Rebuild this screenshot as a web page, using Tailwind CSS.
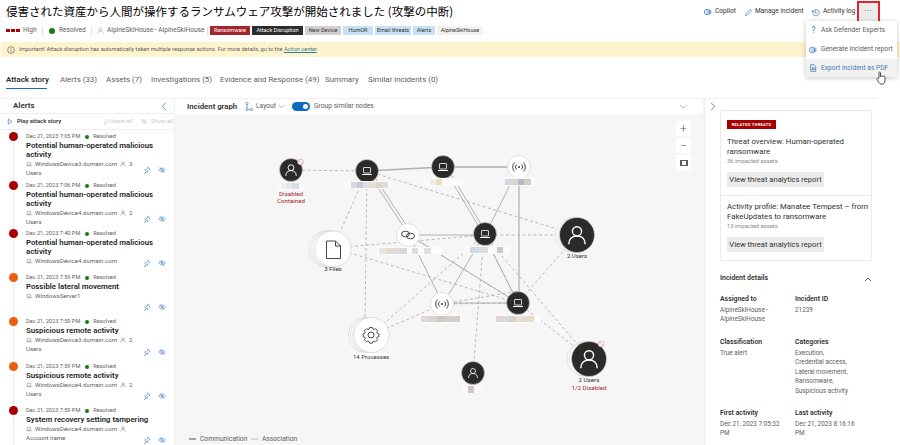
<!DOCTYPE html>
<html lang="en">
<head>
  <meta charset="UTF-8">
  <title>Incident page</title>
  <script src="https://cdn.jsdelivr.net/npm/@tailwindcss/browser@4"></script>
</head>
<body class="relative w-[900px] h-[445px] overflow-hidden bg-white text-[#323130] font-['Roboto','Noto_Sans_CJK_JP',sans-serif]">

  <!-- shared icons -->
  <svg class="absolute w-0 h-0">
    <symbol id="person" viewBox="0 0 24 24"><circle cx="12" cy="8" r="5" fill="none" stroke="currentColor" stroke-width="1.6"/><path d="M3 22c0-6 4-9 9-9s9 3 9 9" fill="none" stroke="currentColor" stroke-width="1.6"/></symbol>
    <symbol id="laptop" viewBox="0 0 24 24"><rect x="5" y="5" width="14" height="11" rx="1" fill="none" stroke="currentColor" stroke-width="1.6"/><path d="M2 19h20" stroke="currentColor" stroke-width="2"/></symbol>
    <symbol id="pin" viewBox="0 0 24 24"><path d="M14 3l7 7-3 1-4 4-1 5-3-3-6 6 6-6-5-5 5-1 4-4z" fill="none" stroke="currentColor" stroke-width="1.8"/></symbol>
    <symbol id="hide" viewBox="0 0 24 24"><path d="M2 12c3-4 6-6 10-6s7 2 10 6c-3 4-6 6-10 6s-7-2-10-6z" fill="none" stroke="currentColor" stroke-width="1.8"/><circle cx="12" cy="12" r="3" fill="none" stroke="currentColor" stroke-width="1.8"/><path d="M5 4l15 16" stroke="currentColor" stroke-width="1.8"/></symbol>
    <symbol id="copilot" viewBox="0 0 24 24"><circle cx="9" cy="12" r="8" fill="none" stroke="currentColor" stroke-width="2.4"/><circle cx="15" cy="12" r="8" fill="currentColor" opacity=".55"/><path d="M12 4v16" stroke="#fff" stroke-width="2"/></symbol>
  </svg>

  <!-- title + actions -->
  <header class="flex h-[23px] items-start">
    <h1 class="w-[704px] shrink-0 pl-[6px] pt-[3px] text-[11.5px] leading-[16px] whitespace-nowrap text-black font-['Noto_Sans_CJK_JP',sans-serif]">侵害された資産から人間が操作するランサムウェア攻撃が開始されました (攻撃の中断)</h1>
    <div class="flex items-center text-[6.6px] text-[#323130] h-[23px] pt-[1px]">
      <svg class="w-[8px] h-[8px] mr-[3px] text-[#3f7fc4]"><use href="#copilot"/></svg>
      <span class="w-[21px] mr-[8px] whitespace-nowrap">Copilot</span>
      <svg class="w-[9px] h-[9px] mr-[2px] text-[#3f7fc4]" viewBox="0 0 24 24"><path d="M4 20l1-5L17 3l4 4L9 19z" fill="none" stroke="currentColor" stroke-width="2"/></svg>
      <span class="w-[49px] mr-[7px] whitespace-nowrap">Manage incident</span>
      <svg class="w-[9px] h-[9px] mr-[3px] text-[#3f7fc4]" viewBox="0 0 24 24"><path d="M4 6v5h5M5 11a8.500 8.500 0 1 1 0 3" fill="none" stroke="currentColor" stroke-width="2"/><path d="M12 7v6l4 2" fill="none" stroke="currentColor" stroke-width="2"/></svg>
      <span class="whitespace-nowrap">Activity log</span>
    </div>
  </header>

  <!-- the boxed overflow button -->
  <div class="absolute left-[857px] top-[1px] w-[23px] h-[23px] border-2 border-[#e8222a] bg-[#ebebeb] flex items-center justify-center text-[8px] leading-none tracking-[0.5px] pb-[3px]">···</div>

  <!-- status + tags -->
  <div class="flex items-center h-[15px] text-[6.6px] text-[#605e5c] whitespace-nowrap">
    <div class="flex gap-[1px] ml-[6px] mr-[3px]">
      <span class="w-[4px] h-[3px] bg-[#a80000]"></span><span class="w-[4px] h-[3px] bg-[#a80000]"></span><span class="w-[4px] h-[3px] bg-[#a80000]"></span>
    </div>
    <span class="w-[14px]">High</span>
    <span class="w-px h-[8px] bg-[#e1dfdd] ml-[5px] mr-[6px]"></span>
    <span class="w-[6px] h-[6px] rounded-full bg-[#107c10] mr-[4px]"></span>
    <span class="w-[27px]">Resolved</span>
    <span class="w-px h-[8px] bg-[#e1dfdd] ml-[5px] mr-[5px]"></span>
    <svg class="w-[7px] h-[7px] mr-[3px] text-[#8a8886]"><use href="#person"/></svg>
    <span class="w-[98px]">AlpineSkiHouse - AlpineSkiHouse</span>
    <span class="w-px h-[8px] bg-[#e1dfdd] ml-[2px] mr-[2px]"></span>
    <div class="flex gap-[2px] text-[5.5px] leading-[9px]">
      <span class="w-[40px] text-center bg-[#a4262c] text-white">Ransomware</span>
      <span class="w-[51px] text-center bg-[#2b2b2b] text-white">Attack Disruption</span>
      <span class="w-[36px] text-center bg-[#d2d0ce] text-[#323130]">New Device</span>
      <span class="w-[30px] text-center bg-[#c7e0f4] text-[#323130]">HumOR</span>
      <span class="w-[36px] text-center bg-[#c7e0f4] text-[#323130]">Email threats</span>
      <span class="w-[22px] text-center bg-[#c7e0f4] text-[#323130]">Alerts</span>
      <span class="w-[46px] text-center bg-[#f3f2f1] text-[#323130]">AlpineSkiHouse</span>
    </div>
  </div>

  <!-- warning banner -->
  <div class="flex items-center h-[15px] mt-[4px] ml-[1px] pl-[6px] bg-[#fdf3cd] text-[5.6px] text-[#605e5c] whitespace-nowrap">
    <svg class="w-[8px] h-[8px] mr-[4px]" viewBox="0 0 24 24"><circle cx="12" cy="12" r="10" fill="none" stroke="#323130" stroke-width="1.6"/><path d="M12 11v6M12 7v2" stroke="#323130" stroke-width="2"/></svg>
    <span>Important! Attack disruption has automatically taken multiple response actions. For more details, go to the <span class="text-[#2f7f9f] underline">Action center</span>.</span>
  </div>

  <!-- tabs -->
  <nav class="flex h-[17px] mt-[15px] ml-[6px] text-[7.9px] leading-[13px] text-[#605e5c] whitespace-nowrap">
    <div class="w-[54px]"><span class="block w-[41px] h-[17px] pt-[1px] border-b-[1.5px] border-[#0f6cbd] font-semibold text-[#323130]">Attack story</span></div>
    <span class="w-[46px] pt-[1px]">Alerts (33)</span>
    <span class="w-[45px] pt-[1px]">Assets (7)</span>
    <span class="w-[69px] pt-[1px]">Investigations (5)</span>
    <span class="w-[105px] pt-[1px]">Evidence and Response (49)</span>
    <span class="w-[43px] pt-[1px]">Summary</span>
    <span class="pt-[1px]">Similar incidents (0)</span>
  </nav>

  <!-- main area -->
  <main class="flex h-[347px] mt-[9px] w-[877px] border-t border-[#f0f0f0]">

    <!-- alerts panel -->
    <section class="w-[175px] shrink-0 overflow-hidden border-r border-[#f0f0f0]">
      <div class="flex items-center h-[15px] pl-[13px] pr-[7px] border-b border-[#f0f0f0] text-[8px] font-semibold">
        <span class="flex-1">Alerts</span>
        <svg class="w-[6px] h-[9px] text-[#3f7fc4]" viewBox="0 0 6 10"><path d="M5 1L1 5l4 4" fill="none" stroke="currentColor"/></svg>
      </div>
      <div class="flex items-center h-[16px] pl-[7px] border-b border-[#f0f0f0] text-[5.9px] whitespace-nowrap">
        <svg class="w-[6px] h-[7px] mr-[4px] text-[#3f7fc4]" viewBox="0 0 6 8"><path d="M1 1l4 3-4 3z" fill="none" stroke="currentColor" stroke-width=".8"/></svg>
        <span class="w-[86px] font-semibold">Play attack story</span>
        <svg class="w-[7px] h-[7px] text-[#c8c6c4]"><use href="#pin"/></svg>
        <span class="w-[22px] text-[#c8c6c4] mr-[8px]">Unpin all</span>
        <svg class="w-[8px] h-[7px] mr-[3px] text-[#c8c6c4]"><use href="#hide"/></svg>
        <span class="text-[#c8c6c4]">Show all</span>
      </div>

      <div class="flex h-[49px] mt-[2px] pl-[8px]">
        <div class="flex flex-col items-center w-[10px] mr-[8px]"><span class="w-[9px] h-[9px] shrink-0 rounded-full bg-[#a80000]"></span><span class="w-px flex-1 bg-[#e8e8e8] mt-[2px]"></span></div>
        <div class="w-[117px] text-[6.1px] leading-[9px] text-[#605e5c] whitespace-nowrap">
          <div class="flex items-center text-[5.6px]">Dec 21, 2023 7:05 PM<span class="w-[4px] h-[4px] rounded-full bg-[#107c10] ml-[5px] mr-[4px]"></span>Resolved</div>
          <div class="text-[7.8px] font-semibold text-[#201f1e]">Potential human-operated malicious<br>activity</div>
          <div class="flex items-center"><svg class="w-[6px] h-[6px] mr-[3px]"><use href="#laptop"/></svg>WindowsDevice3.domain.com<svg class="w-[6px] h-[6px] ml-[3px] mr-[3px]"><use href="#person"/></svg>3</div>
          <div>Users</div>
        </div>
        <div class="flex gap-[7px] self-end pb-[7px] text-[#3f7fc4]"><svg class="w-[8px] h-[8px]"><use href="#pin"/></svg><svg class="w-[8px] h-[8px]"><use href="#hide"/></svg></div>
      </div>
      <div class="flex h-[48px] pl-[8px]">
        <div class="flex flex-col items-center w-[10px] mr-[8px]"><span class="w-[9px] h-[9px] shrink-0 rounded-full bg-[#a80000]"></span><span class="w-px flex-1 bg-[#e8e8e8] mt-[2px]"></span></div>
        <div class="w-[117px] text-[6.1px] leading-[9px] text-[#605e5c] whitespace-nowrap">
          <div class="flex items-center text-[5.6px]">Dec 21, 2023 7:06 PM<span class="w-[4px] h-[4px] rounded-full bg-[#107c10] ml-[5px] mr-[4px]"></span>Resolved</div>
          <div class="text-[7.8px] font-semibold text-[#201f1e]">Potential human-operated malicious<br>activity</div>
          <div class="flex items-center"><svg class="w-[6px] h-[6px] mr-[3px]"><use href="#laptop"/></svg>WindowsDevice4.domain.com<svg class="w-[6px] h-[6px] ml-[3px] mr-[3px]"><use href="#person"/></svg>2</div>
          <div>Users</div>
        </div>
        <div class="flex gap-[7px] self-end pb-[6px] text-[#3f7fc4]"><svg class="w-[8px] h-[8px]"><use href="#pin"/></svg><svg class="w-[8px] h-[8px]"><use href="#hide"/></svg></div>
      </div>
      <div class="flex h-[44px] pl-[8px]">
        <div class="flex flex-col items-center w-[10px] mr-[8px]"><span class="w-[9px] h-[9px] shrink-0 rounded-full bg-[#a80000]"></span><span class="w-px flex-1 bg-[#e8e8e8] mt-[2px]"></span></div>
        <div class="w-[117px] text-[6.1px] leading-[9px] text-[#605e5c] whitespace-nowrap">
          <div class="flex items-center text-[5.6px]">Dec 21, 2023 7:40 PM<span class="w-[4px] h-[4px] rounded-full bg-[#107c10] ml-[5px] mr-[4px]"></span>Resolved</div>
          <div class="text-[7.8px] font-semibold text-[#201f1e]">Potential human-operated malicious<br>activity</div>
          <div class="flex items-center"><svg class="w-[6px] h-[6px] mr-[3px]"><use href="#laptop"/></svg>WindowsDevice4.domain.com</div>
        </div>
        <div class="flex gap-[7px] self-end pb-[6px] text-[#3f7fc4]"><svg class="w-[8px] h-[8px]"><use href="#pin"/></svg><svg class="w-[8px] h-[8px]"><use href="#hide"/></svg></div>
      </div>
      <div class="flex h-[44px] pl-[8px]">
        <div class="flex flex-col items-center w-[10px] mr-[8px]"><span class="w-[9px] h-[9px] shrink-0 rounded-full bg-[#ea5f0d]"></span><span class="w-px flex-1 bg-[#e8e8e8] mt-[2px]"></span></div>
        <div class="w-[117px] text-[6.1px] leading-[9px] text-[#605e5c] whitespace-nowrap">
          <div class="flex items-center text-[5.6px]">Dec 21, 2023 7:59 PM<span class="w-[4px] h-[4px] rounded-full bg-[#107c10] ml-[5px] mr-[4px]"></span>Resolved</div>
          <div class="text-[7.8px] font-semibold text-[#201f1e]">Possible lateral movement</div>
          <div class="flex items-center"><svg class="w-[6px] h-[6px] mr-[3px]"><use href="#laptop"/></svg>WindowsServer1</div>
        </div>
        <div class="flex gap-[7px] self-end pb-[6px] text-[#3f7fc4]"><svg class="w-[8px] h-[8px]"><use href="#pin"/></svg><svg class="w-[8px] h-[8px]"><use href="#hide"/></svg></div>
      </div>
      <div class="flex h-[45px] pl-[8px]">
        <div class="flex flex-col items-center w-[10px] mr-[8px]"><span class="w-[9px] h-[9px] shrink-0 rounded-full bg-[#ea5f0d]"></span><span class="w-px flex-1 bg-[#e8e8e8] mt-[2px]"></span></div>
        <div class="w-[117px] text-[6.1px] leading-[9px] text-[#605e5c] whitespace-nowrap">
          <div class="flex items-center text-[5.6px]">Dec 21, 2023 7:59 PM<span class="w-[4px] h-[4px] rounded-full bg-[#107c10] ml-[5px] mr-[4px]"></span>Resolved</div>
          <div class="text-[7.8px] font-semibold text-[#201f1e]">Suspicious remote activity</div>
          <div class="flex items-center"><svg class="w-[6px] h-[6px] mr-[3px]"><use href="#laptop"/></svg>WindowsDevice3.domain.com<svg class="w-[6px] h-[6px] ml-[3px] mr-[3px]"><use href="#person"/></svg>2</div>
          <div>Users</div>
        </div>
        <div class="flex gap-[7px] self-end pb-[6px] text-[#3f7fc4]"><svg class="w-[8px] h-[8px]"><use href="#pin"/></svg><svg class="w-[8px] h-[8px]"><use href="#hide"/></svg></div>
      </div>
      <div class="flex h-[44px] pl-[8px]">
        <div class="flex flex-col items-center w-[10px] mr-[8px]"><span class="w-[9px] h-[9px] shrink-0 rounded-full bg-[#ea5f0d]"></span><span class="w-px flex-1 bg-[#e8e8e8] mt-[2px]"></span></div>
        <div class="w-[117px] text-[6.1px] leading-[9px] text-[#605e5c] whitespace-nowrap">
          <div class="flex items-center text-[5.6px]">Dec 21, 2023 7:59 PM<span class="w-[4px] h-[4px] rounded-full bg-[#107c10] ml-[5px] mr-[4px]"></span>Resolved</div>
          <div class="text-[7.8px] font-semibold text-[#201f1e]">Suspicious remote activity</div>
          <div class="flex items-center"><svg class="w-[6px] h-[6px] mr-[3px]"><use href="#laptop"/></svg>WindowsDevice4.domain.com<svg class="w-[6px] h-[6px] ml-[3px] mr-[3px]"><use href="#person"/></svg>2</div>
          <div>Users</div>
        </div>
        <div class="flex gap-[7px] self-end pb-[6px] text-[#3f7fc4]"><svg class="w-[8px] h-[8px]"><use href="#pin"/></svg><svg class="w-[8px] h-[8px]"><use href="#hide"/></svg></div>
      </div>
      <div class="flex h-[44px] pl-[8px]">
        <div class="flex flex-col items-center w-[10px] mr-[8px]"><span class="w-[9px] h-[9px] shrink-0 rounded-full bg-[#a80000]"></span><span class="w-px flex-1 bg-[#e8e8e8] mt-[2px]"></span></div>
        <div class="w-[117px] text-[6.1px] leading-[9px] text-[#605e5c] whitespace-nowrap">
          <div class="flex items-center text-[5.6px]">Dec 21, 2023 7:59 PM<span class="w-[4px] h-[4px] rounded-full bg-[#107c10] ml-[5px] mr-[4px]"></span>Resolved</div>
          <div class="text-[7.8px] font-semibold text-[#201f1e]">System recovery setting tampering</div>
          <div class="flex items-center"><svg class="w-[6px] h-[6px] mr-[3px]"><use href="#laptop"/></svg>WindowsDevice4.domain.com<svg class="w-[6px] h-[6px] ml-[3px] mr-[3px]"><use href="#person"/></svg></div>
          <div>Account name</div>
        </div>
        <div class="flex gap-[7px] self-end pb-[6px] text-[#3f7fc4]"><svg class="w-[8px] h-[8px]"><use href="#pin"/></svg><svg class="w-[8px] h-[8px]"><use href="#hide"/></svg></div>
      </div>
    </section>

    <!-- incident graph -->
    <section class="w-[528px] shrink-0 flex flex-col">
      <div class="flex items-center h-[15px] pl-[12px] pr-[15px] text-[6.7px] text-[#605e5c] whitespace-nowrap">
        <span class="w-[50px] text-[7.8px] font-semibold text-[#323130] mr-[8px]">Incident graph</span>
        <svg class="w-[8px] h-[9px] mr-[3px] text-[#3f7fc4]" viewBox="0 0 8 9"><circle cx="2" cy="1.500" r="1.200" fill="none" stroke="currentColor" stroke-width=".7"/><circle cx="2" cy="7.500" r="1.200" fill="none" stroke="currentColor" stroke-width=".7"/><circle cx="6.500" cy="7.500" r="1.200" fill="none" stroke="currentColor" stroke-width=".7"/><path d="M2 3v3M3.500 7.500h1.800" stroke="currentColor" stroke-width=".7"/></svg>
        <span class="w-[19px] mr-[3px]">Layout</span>
        <svg class="w-[7px] h-[5px] mr-[7px] text-[#8a8886]" viewBox="0 0 8 5"><path d="M1 1l3 3 3-3" fill="none" stroke="currentColor" stroke-width=".8"/></svg>
        <span class="flex justify-end items-center w-[18px] h-[9px] rounded-full bg-[#0f6cbd] pr-[2px] mr-[4px]"><span class="w-[5px] h-[5px] rounded-full bg-white"></span></span>
        <span>Group similar nodes</span>
        <svg class="w-[9px] h-[5px] ml-auto text-[#a19f9d]" viewBox="0 0 9 5"><path d="M1 1l3.500 3L8 1" fill="none" stroke="currentColor" stroke-width=".7"/></svg>
      </div>

      <div class="relative flex-1 bg-[#f6f6f6] overflow-hidden">
        <svg class="absolute left-0 top-0 w-[528px] h-[332px]" viewBox="175 113 528 332">
          <!-- dashed edges -->
          <g stroke="#a8a8a8" stroke-width="0.8" stroke-dasharray="3 2.500" fill="none">
            <path d="M291 169L367 170"/><path d="M367 170L333 247"/><path d="M367 170L365 320"/><path d="M367 170L577 234"/>
            <path d="M333 247L484 234"/><path d="M333 247L518 302"/><path d="M484 234L577 234"/><path d="M484 234L371 334"/>
            <path d="M484 234L473 372"/><path d="M577 234L518 302"/><path d="M371 334L443 303"/><path d="M443 303L518 302"/>
            <path d="M518 302L589 357"/><path d="M484 234L589 357"/><path d="M409 234L518 302"/><path d="M443 303L518 290"/><path d="M484 234L518 302"/>
          </g>
          <!-- solid edges -->
          <g stroke="#b0b0b0" fill="none">
            <path d="M367 170L443 166" stroke-width="1.500"/><path d="M443 166L519 166" stroke-width="1.500"/>
            <path d="M519 166L490 224" stroke-width="1"/><path d="M519 166V302" stroke-width="1.200"/>
            <path d="M367 170L409 234" stroke-width="1"/><path d="M370 169L412 233" stroke-width="1"/>
            <path d="M409 234H484" stroke-width="1.200"/><path d="M443 166L484 234" stroke-width="1"/><path d="M446 165L487 233" stroke-width="1"/>
            <path d="M409 234L518 302" stroke-width="1"/><path d="M409 234L443 303" stroke-width="1"/>
            <path d="M484 234L443 303" stroke-width="1"/><path d="M484 234L518 302" stroke-width="1"/><path d="M443 302H518" stroke-width="1.200"/>
          </g>
          <!-- stacked nodes behind -->
          <g fill="#fff" stroke="#d4d4d4" stroke-width=".7">
            <circle cx="327" cy="248" r="18"/><circle cx="329" cy="248" r="18"/><circle cx="331" cy="248" r="18"/>
            <circle cx="366" cy="334" r="17.500"/><circle cx="368" cy="334" r="17.500"/><circle cx="370" cy="334" r="17.500"/>
            <circle cx="572.500" cy="234" r="17"/><circle cx="575" cy="234" r="17"/>
            <circle cx="584" cy="358" r="17"/><circle cx="586" cy="358" r="17"/>
          </g>
          <!-- white nodes -->
          <g fill="#fff" stroke="#d8d8d8" stroke-width=".8">
            <circle cx="333" cy="248" r="18"/><circle cx="371.500" cy="334" r="17.500"/>
            <circle cx="519" cy="166" r="11.500"/><circle cx="408" cy="234" r="11.500"/><circle cx="442" cy="303" r="11.500"/>
          </g>
          <!-- dark nodes -->
          <g fill="#2b2a29" stroke="#dcdcdc" stroke-width=".6">
            <circle cx="291" cy="169" r="11.500"/><circle cx="367" cy="170" r="11.500"/><circle cx="443" cy="166" r="11.500"/>
            <circle cx="485" cy="233" r="11.500"/><circle cx="518" cy="302" r="11.500"/><circle cx="473" cy="372" r="11.500"/>
            <circle cx="577" cy="234" r="17.500"/><circle cx="589" cy="358" r="17.500"/>
          </g>
          <!-- icons on nodes -->
          <g class="text-white">
            <use href="#person" x="284" y="162" width="14" height="14"/><use href="#laptop" x="361" y="164" width="12" height="12"/>
            <use href="#laptop" x="437" y="160" width="12" height="12"/><use href="#laptop" x="479" y="227" width="12" height="12"/>
            <use href="#laptop" x="512" y="296" width="12" height="12"/><use href="#person" x="467" y="366" width="12" height="12"/>
            <use href="#person" x="566" y="223" width="22" height="22"/><use href="#person" x="578" y="347" width="22" height="22"/>
          </g>
          <g fill="none" stroke="#323130" stroke-width=".9">
            <!-- file -->
            <path d="M326.500 240h9l5 5v12.500h-14z"/><path d="M335.500 240v5h5"/>
            <!-- gear -->
            <circle cx="371" cy="334" r="3"/>
            <path d="M369 326h4l.6 2.200 1.700.7 2-1.100 2.800 2.800-1.100 2 .7 1.700 2.200.6v4l-2.200.6-.7 1.700 1.100 2-2.800 2.800-2-1.100-1.700.7-.6 2.200h-4l-.6-2.200-1.700-.7-2 1.100-2.800-2.800 1.100-2-.7-1.700-2.200-.6v-4l2.200-.6.7-1.700-1.100-2 2.800-2.800 2 1.100 1.700-.7z" transform="translate(371 334) scale(.72) translate(-371 -336.500)" stroke-width="1.200"/>
            <!-- link -->
            <ellipse cx="405.500" cy="233" rx="4" ry="2.800"/><ellipse cx="410.500" cy="235" rx="4" ry="2.800"/>
            <!-- signal 1 -->
            <path d="M516.500 163.500a3.500 3.500 0 0 0 0 5M521.500 163.500a3.500 3.500 0 0 1 0 5M514.500 161.500a6.500 6.500 0 0 0 0 9M523.500 161.500a6.500 6.500 0 0 1 0 9"/>
            <!-- signal 2 -->
            <path d="M439.500 300.500a3.500 3.500 0 0 0 0 5M444.500 300.500a3.500 3.500 0 0 1 0 5M437.500 298.500a6.500 6.500 0 0 0 0 9M446.500 298.500a6.500 6.500 0 0 1 0 9"/>
          </g>
          <circle cx="519" cy="166" r="1" fill="#323130"/><circle cx="442" cy="303" r="1" fill="#323130"/>
          <!-- disabled badges -->
          <g fill="#fff" stroke="#d8a0a8" stroke-width=".8">
            <circle cx="300.500" cy="161" r="2.800"/><path d="M298.700 159.200l3.600 3.600"/>
            <circle cx="601" cy="343" r="2.800"/><path d="M599.200 341.200l3.600 3.600"/>
          </g>
          <!-- redacted labels -->
          <rect x="278" y="181" width="26" height="8" fill="#fbfbfb"/><rect x="281" y="182" width="6" height="6" fill="#f3ece4"/><rect x="287" y="182" width="5" height="6" fill="#e4e6ea"/><rect x="292" y="182" width="7" height="6" fill="#d6dde6"/>
          <rect x="344" y="180" width="47" height="8" fill="#fbfbfb"/><rect x="351" y="181" width="6" height="6" fill="#d8d9dd"/><rect x="357" y="181" width="6" height="6" fill="#c4cdd5"/><rect x="363" y="181" width="6" height="6" fill="#dfe0e3"/><rect x="369" y="181" width="7" height="6" fill="#e6dfd6"/><rect x="376" y="181" width="6" height="6" fill="#ddd5c8"/><rect x="382" y="181" width="6" height="6" fill="#dddde0"/>
          <rect x="423" y="177" width="40" height="8" fill="#fbfbfb"/><rect x="430" y="178" width="6" height="6" fill="#f3ece0"/><rect x="436" y="178" width="6" height="6" fill="#eddcbe"/>
          <rect x="505" y="176" width="30" height="9" fill="#fbfbfb"/><rect x="505" y="178" width="7" height="6" fill="#cfd6de"/><rect x="512" y="178" width="6" height="6" fill="#e0d5cc"/><rect x="518" y="178" width="6" height="6" fill="#b5bcc6"/><rect x="524" y="178" width="7" height="6" fill="#d8cdc4"/>
          <rect x="377" y="246" width="65" height="8" fill="#fbfbfb"/><rect x="379" y="247" width="7" height="6" fill="#ece4e0"/><rect x="386" y="247" width="7" height="6" fill="#e8d9d0"/><rect x="393" y="247" width="7" height="6" fill="#dcdcdc"/><rect x="400" y="247" width="7" height="6" fill="#d8d8d8"/><rect x="412" y="247" width="6" height="6" fill="#dcdfd8"/><rect x="424" y="247" width="7" height="6" fill="#e0e0e0"/>
          <rect x="463" y="245" width="46" height="8" fill="#fbfbfb"/><rect x="470" y="246" width="6" height="6" fill="#ccd8e6"/><rect x="476" y="246" width="6" height="6" fill="#d4dce6"/><rect x="482" y="246" width="6" height="6" fill="#dcdcdc"/><rect x="497" y="246" width="6" height="6" fill="#c8c8c8"/>
          <rect x="420" y="314" width="42" height="8" fill="#fbfbfb"/><rect x="421" y="315" width="8" height="6" fill="#dcd8d8"/><rect x="429" y="315" width="8" height="6" fill="#d6d2d0"/><rect x="437" y="315" width="8" height="6" fill="#ccc8c4"/><rect x="445" y="315" width="15" height="6" fill="#d4cec8"/>
          <rect x="495" y="314" width="46" height="8" fill="#fbfbfb"/><rect x="496" y="315" width="7" height="6" fill="#e0d4cc"/><rect x="503" y="315" width="6" height="6" fill="#cfdce0"/><rect x="509" y="315" width="7" height="6" fill="#dccfc0"/><rect x="516" y="315" width="6" height="6" fill="#e4e0e0"/><rect x="522" y="315" width="12" height="6" fill="#e6dccc"/>
          <rect x="461" y="385" width="21" height="7" fill="#fbfbfb"/><rect x="468" y="385" width="6" height="7" fill="#d4c4c8"/>
          <!-- legend -->
          <path d="M189 438h7" stroke="#888" stroke-width="1.500"/><path d="M251 438h7" stroke="#aaa" stroke-width=".8"/>
        </svg>

        <!-- node captions -->
        <div class="absolute left-[96px] top-[77px] w-[40px] text-center text-[6.2px] leading-[6.5px] text-[#a4262c]">Disabled<br>Contained</div>
        <div class="absolute left-[138px] top-[151px] w-[40px] text-center text-[6px] leading-[8px] text-[#323130]">3 Files</div>
        <div class="absolute left-[178px] top-[239px] w-[34px] text-center text-[6px] leading-[7px] bg-white text-[#323130] whitespace-nowrap">14 Processes</div>
        <div class="absolute left-[382px] top-[138px] w-[40px] text-center text-[6px] leading-[7px] text-[#323130]">2 Users</div>
        <div class="absolute left-[394px] top-[262px] w-[40px] text-center text-[6.2px] leading-[8px] text-[#323130]">2 Users<br><span class="text-[#a4262c]">1/2 Disabled</span></div>
        <div class="absolute left-[25px] top-[320px] text-[6.7px] leading-[10px] text-[#605e5c]">Communication</div>
        <div class="absolute left-[87px] top-[320px] text-[6.7px] leading-[10px] text-[#605e5c]">Association</div>

        <!-- zoom controls -->
        <div class="absolute left-[501px] top-[7px] flex flex-col gap-[2px] text-[#605e5c]">
          <span class="flex items-center justify-center w-[15px] h-[15px] bg-white text-[12px] font-light leading-none">+</span>
          <span class="flex items-center justify-center w-[15px] h-[15px] bg-white text-[12px] font-light leading-none">−</span>
          <span class="flex items-center justify-center w-[15px] h-[15px] bg-white"><span class="w-[8px] h-[6px] border-x-2 border-y border-[#605e5c]"></span></span>
        </div>
      </div>
    </section>

    <!-- details panel -->
    <aside class="flex-1 relative border-l-[3px] border-[#f3f3f3] text-[6.4px] leading-[9.5px]">
      <svg class="absolute left-[4px] top-[3px] w-[6px] h-[9px] text-[#3f7fc4]" viewBox="0 0 6 10"><path d="M1 1l4 4-4 4" fill="none" stroke="currentColor"/></svg>
      <div class="ml-[14px] mt-[11px] w-[152px] border border-[#edebe9] rounded-[2px] text-[#323130]">
        <div class="px-[6px] pt-[9px] h-[85px] border-b border-[#edebe9]">
          <span class="flex items-center justify-center w-[49px] h-[9px] bg-[#a80000] text-white text-[4px] font-bold tracking-[0.3px] leading-none whitespace-nowrap">RELATED THREATS</span>
          <div class="mt-[8px] text-[7.8px]">Threat overview: Human-operated<br>ransomware</div>
          <div class="mt-[1px] text-[5.8px] text-[#8a8886]">36 impacted assets</div>
          <div class="mt-[5px] w-[97px] h-[15px] bg-[#ebebeb] text-center text-[7.6px] leading-[15px]">View threat analytics report</div>
        </div>
        <div class="px-[6px] pt-[6px] h-[64px]">
          <div class="text-[7.8px] whitespace-nowrap">Activity profile: Manatee Tempest – from<br>FakeUpdates to ransomware</div>
          <div class="mt-[1px] text-[5.8px] text-[#8a8886]">13 impacted assets</div>
          <div class="mt-[5px] w-[97px] h-[15px] bg-[#ebebeb] text-center text-[7.6px] leading-[15px]">View threat analytics report</div>
        </div>
      </div>

      <div class="flex items-center justify-between ml-[14px] w-[152px] mt-[13px] h-[10px] font-semibold text-[7px]">
        <span>Incident details</span>
        <svg class="w-[8px] h-[5px]" viewBox="0 0 8 5"><path d="M1 4l3-3 3 3" fill="none" stroke="#323130" stroke-width=".8"/></svg>
      </div>
      <div class="grid grid-cols-[75px_1fr] ml-[14px] mt-[11px] text-[#605e5c] whitespace-nowrap">
        <div class="h-[43px]"><div class="text-[6.9px] font-semibold text-[#323130] mb-[1px]">Assigned to</div>AlpineSkiHouse -<br>AlpineSkiHouse</div>
        <div><div class="text-[6.9px] font-semibold text-[#323130] mb-[1px]">Incident ID</div>21239</div>
        <div class="h-[71px]"><div class="text-[6.9px] font-semibold text-[#323130] mb-[1px]">Classification</div>True alert</div>
        <div><div class="text-[6.9px] font-semibold text-[#323130] mb-[1px]">Categories</div>Execution,<br>Credential access,<br>Lateral movement,<br>Ransomware,<br>Suspicious activity</div>
        <div><div class="text-[6.9px] font-semibold text-[#323130] mb-[1px]">First activity</div>Dec 21, 2023 7:05:32<br>PM</div>
        <div><div class="text-[6.9px] font-semibold text-[#323130] mb-[1px]">Last activity</div>Dec 21, 2023 8:16:16<br>PM</div>
      </div>
    </aside>
  </main>

  <!-- overflow menu -->
  <div class="absolute left-[806px] top-[21px] w-[91px] h-[56px] bg-white shadow-[0_1px_5px_rgba(0,0,0,0.22)] text-[6.7px] text-[#605e5c] whitespace-nowrap">
    <div class="flex items-center h-[19px] pl-[3px]"><span class="w-[9px] mr-[3px] text-center text-[#3f7fc4] text-[9px]">?</span>Ask Defender Experts</div>
    <div class="flex items-center h-[19px] pl-[3px]"><svg class="w-[8px] h-[8px] mr-[4px] text-[#3f7fc4]"><use href="#copilot"/></svg>Generate incident report</div>
    <div class="flex items-center h-[18px] pl-[3px] bg-[#f3f2f1] text-[#3f7fc4]">
      <svg class="w-[8px] h-[8px] mr-[4px]" viewBox="0 0 24 24"><path d="M5 2h10l5 5v15H5z" fill="none" stroke="currentColor" stroke-width="2.400"/><path d="M8 12h9M8 16h9" stroke="currentColor" stroke-width="3"/></svg>Export incident as PDF
    </div>
  </div>
  <!-- hand cursor -->
  <svg class="absolute left-[876px] top-[71px] w-[11px] h-[14px]" viewBox="0 0 11 14"><path d="M3 7V1.800c0-1 1.500-1 1.500 0V5.500c0-.8 1.500-.8 1.500 0 0-.7 1.500-.7 1.500 0 0-.5 1.500-.5 1.500.3V10c0 1.500-1 3-2.500 3H5c-1 0-1.500-.6-2-1.500L1 8.500c-.5-1 .7-1.700 1.300-.8z" fill="#fff" stroke="#222" stroke-width=".8"/></svg>
</body>
</html>
